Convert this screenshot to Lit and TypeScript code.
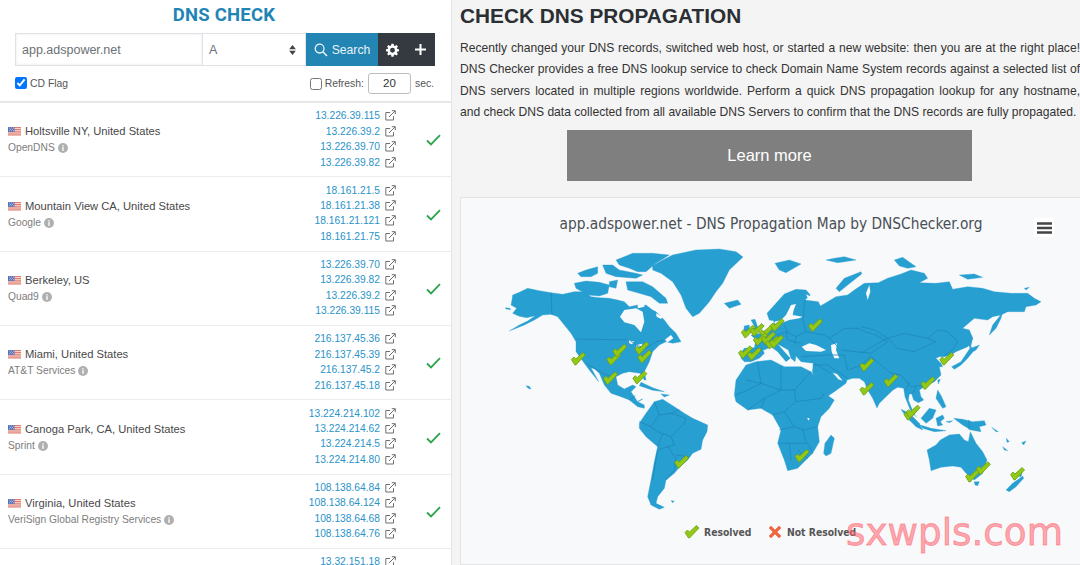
import { LitElement, html, css, svg } from "lit";
import { customElement } from "lit/decorators.js";

const poly = (pts: string) => "M" + pts.trim().replace(/\)\s*\(/g, " L").replace(/[()]/g, "") + " Z";
const line = (pts: string) => "M" + pts.trim().replace(/\)\s*\(/g, " L").replace(/[()]/g, "");

interface Group { tx: number; ty: number; land: string[]; holes: string[]; borders: string[]; }

const GROUPS: Group[] = [
  {
    tx: 495, ty: 245,
    land: [
      "(40,258)(70,240)(95,228)(118,212)(92,218)(70,214)(50,205)(62,190)(45,180)(48,165)(50,150)(70,142)(95,130)(130,137)(165,143)(200,148)(235,140)(265,140)(285,155)(310,158)(340,160)(365,165)(385,170)(400,185)(425,180)(450,180)(470,195)(480,200)(505,225)(520,245)(540,265)(555,290)(530,295)(510,290)(490,300)(470,320)(460,350)(445,380)(450,405)(445,405)(432,385)(400,380)(380,385)(360,395)(365,420)(385,432)(410,420)(420,425)(405,440)(425,470)(445,480)(445,490)(425,485)(400,465)(375,455)(345,445)(325,420)(310,385)(296,372)(285,368)(308,410)(280,375)(265,355)(240,320)(240,290)(225,265)(205,240)(185,215)(165,208)(140,210)(115,225)(85,240)",
      "(28,188)(42,190)(44,194)(30,192)",
      "(235,115)(270,108)(310,112)(340,120)(335,145)(310,153)(275,150)(240,130)",
      "(245,85)(270,75)(305,65)(305,85)(285,95)(255,95)",
      "(320,60)(350,60)(370,75)(420,85)(440,90)(420,100)(360,95)(330,85)",
      "(360,45)(410,25)(470,25)(520,30)(480,55)(450,80)(425,80)(400,70)(370,60)",
      "(390,110)(440,110)(470,125)(510,160)(515,175)(490,175)(465,155)(430,145)(395,135)",
      "(340,110)(365,105)(360,130)(340,125)",
      "(470,62)(500,45)(530,30)(600,15)(670,12)(720,20)(741,36)(700,75)(680,115)(660,140)(640,170)(610,205)(590,215)(570,190)(555,150)(530,110)(495,85)(470,75)",
      "(685,175)(725,165)(735,178)(700,190)",
      "(435,412)(470,428)(505,440)(470,436)(430,422)",
      "(495,447)(520,450)(505,456)",
      "(90,422)(100,424)(105,432)(96,430)",
    ],
    holes: [
      "(372,215)(385,195)(420,190)(440,200)(445,230)(435,262)(415,240)(385,232)",
      "(425,150)(450,155)(445,185)(425,190)",
      "(480,205)(500,215)(495,222)(482,215)",
      "(505,285)(525,270)(532,280)(515,292)",
      "(398,285)(415,290)(408,298)(400,295)",
      "(420,300)(440,296)(435,305)(422,306)",
    ],
    borders: [
      "(165,143)(168,210)", "(242,282)(400,285)(420,300)(450,310)(480,290)(510,285)",
      "(270,355)(320,385)(345,395)(360,395)", "(400,465)(418,452)", "(425,470)(440,462)",
    ],
  },
  {
    tx: 620, ty: 390,
    land: [
      "(55,100)(75,70)(100,35)(125,28)(160,50)(190,70)(215,85)(260,105)(258,125)(245,150)(240,178)(215,190)(200,210)(175,232)(160,250)(135,270)(130,295)(110,320)(105,340)(130,352)(115,358)(90,345)(80,320)(90,270)(100,215)(110,170)(75,140)(55,115)",
      "(150,332)(160,333)(155,338)",
      "(340,15)(345,-30)(375,-75)(405,-85)(450,-90)(490,-70)(540,-70)(570,-55)(590,-30)(610,10)(640,30)(625,55)(600,80)(590,110)(595,155)(575,190)(560,205)(530,235)(500,242)(490,210)(470,160)(480,120)(455,75)(420,55)(380,60)(345,35)",
      "(608,190)(612,160)(630,135)(640,145)(630,190)(615,198)",
    ],
    holes: ["(558,85)(566,84)(563,92)"],
    borders: [
      "(100,35)(115,75)(90,110)(110,125)(150,140)(160,165)(140,170)(110,180)",
      "(115,75)(150,70)(175,60)", "(150,70)(195,85)(190,100)(150,140)", "(140,170)(165,205)(160,240)(135,270)",
      "(90,110)(55,95)", "(125,130)(110,170)", "(110,180)(95,270)", "(165,195)(205,200)",
      "(410,-85)(420,-20)(380,0)(345,15)", "(480,-70)(480,0)(430,25)(380,60)", "(570,-55)(520,0)(480,0)",
      "(520,0)(525,35)(490,65)(455,75)", "(525,35)(600,25)(610,10)", "(490,65)(520,110)(475,120)",
      "(520,110)(550,120)(590,110)", "(475,160)(560,160)(575,190)", "(505,160)(510,210)", "(545,120)(555,155)",
      "(560,205)(530,180)", "(420,55)(430,25)", "(420,-20)(480,0)", "(375,-30)(420,-20)",
    ],
  },
  {
    tx: 730, ty: 250,
    land: [
      "(30,310)(40,295)(70,293)(75,270)(60,255)(90,250)(105,240)(130,235)(128,212)(115,210)(108,190)(135,160)(160,132)(195,118)(225,120)(238,135)(222,150)(262,155)(268,168)(285,158)(315,140)(350,135)(370,120)(400,100)(442,98)(470,85)(510,72)(540,60)(580,70)(590,85)(565,98)(615,100)(655,95)(665,118)(710,110)(755,115)(790,125)(840,130)(890,130)(910,145)(930,155)(915,165)(885,170)(880,185)(830,185)(810,195)(785,200)(770,210)(730,205)(695,235)(715,240)(725,265)(710,290)(675,305)(660,315)(640,320)(625,320)(615,325)(630,340)(635,350)(625,350)(630,375)(610,395)(580,410)(565,420)(570,440)(578,450)(562,458)(548,450)(542,432)(535,432)(532,450)(548,490)(555,500)(538,480)(522,440)(518,415)(500,412)(486,420)(465,440)(445,460)(438,474)(425,445)(410,420)(400,395)(385,385)(365,385)(348,390)(345,400)(310,425)(281,445)(260,410)(244,365)(247,340)(210,335)(195,318)(192,335)(180,325)(172,300)(140,282)(160,305)(178,325)(165,335)(140,305)(120,290)(100,300)(95,297)(100,310)(85,325)(60,335)(40,335)(30,325)",
      "(60,210)(72,208)(85,245)(65,250)(72,232)",
      "(40,228)(55,225)(55,245)(38,245)",
      "(315,115)(340,85)(390,65)(392,72)(350,105)(325,125)",
      "(132,40)(175,30)(210,42)(165,68)(145,60)",
      "(285,30)(310,25)(340,20)(375,30)(320,38)",
      "(490,30)(515,22)(555,50)(530,55)(505,48)",
      "(685,75)(730,72)(755,82)(710,88)",
      "(880,115)(895,112)(885,120)",
      "(662,350)(690,335)(710,305)(720,290)(730,300)(710,325)(690,345)(670,358)",
      "(720,295)(745,285)(735,300)(725,305)",
      "(712,240)(725,265)(718,295)(708,280)",
      "(775,255)(785,225)(805,200)(815,185)(810,205)(795,235)",
      "(620,390)(628,388)(622,402)",
    ],
    holes: [
      "(130,215)(150,210)(165,195)(180,165)(195,162)(188,180)(185,195)(215,200)(205,205)(175,210)(150,220)(132,222)",
      "(212,290)(235,280)(255,285)(285,300)(270,305)(225,303)",
      "(300,285)(318,280)(315,300)(325,325)(310,325)(302,305)",
      "(305,368)(318,372)(335,392)(322,388)",
      "(405,130)(415,105)(418,125)(410,150)",
      "(225,133)(240,140)(232,148)",
    ],
    borders: [
      "(222,150)(215,210)(225,245)(280,255)(295,265)(320,290)",
      "(295,265)(340,235)(380,235)(400,245)(435,255)(470,275)(450,290)(420,310)",
      "(390,230)(430,240)(470,265)(520,250)(590,265)(620,240)(650,245)(680,275)(665,300)(640,315)",
      "(470,265)(500,295)(550,305)(615,275)(590,265)",
      "(390,310)(440,280)(470,265)", "(420,320)(480,370)(510,375)", "(510,375)(540,410)(580,405)",
      "(105,240)(140,255)(165,245)(195,260)(225,245)", "(165,245)(170,270)(210,280)", "(120,250)(130,280)",
      "(140,255)(145,280)", "(75,295)(95,297)", "(210,320)(290,315)(340,315)", "(340,315)(350,360)(380,350)(395,340)",
      "(250,340)(300,370)", "(330,300)(420,310)", "(395,340)(420,320)", "(245,345)(290,345)", "(290,345)(350,385)",
      "(525,420)(535,395)", "(545,430)(555,410)", "(195,260)(190,285)", "(160,225)(170,245)",
    ],
  },
  {
    tx: 880, ty: 380,
    land: [
      "(60,88)(85,100)(115,130)(125,150)(105,140)(75,110)",
      "(118,135)(150,145)(195,152)(160,155)(125,145)",
      "(120,115)(145,85)(165,90)(155,115)(135,130)",
      "(165,115)(185,105)(190,115)(178,125)(185,135)(170,138)",
      "(170,30)(182,50)(195,80)(185,85)(165,55)",
      "(218,115)(245,118)(275,125)(310,122)(315,135)(295,140)(300,155)(270,150)(245,135)",
      "(195,125)(215,122)(205,128)",
      "(138,210)(165,195)(178,180)(205,165)(235,162)(250,180)(262,185)(268,155)(285,190)(305,215)(318,240)(305,280)(280,300)(255,280)(240,262)(215,258)(180,262)(150,272)(145,240)",
      "(280,305)(295,305)(290,317)(282,315)",
      "(375,330)(395,310)(425,288)(428,295)(405,320)(385,335)",
      "(395,285)(425,270)(420,290)",
      "(332,142)(352,155)(345,155)",
      "(376,175)(385,185)(378,187)",
      "(365,200)(380,212)(370,210)",
      "(422,188)(435,183)(428,195)",
    ],
    holes: [],
    borders: ["(263,120)(265,150)"],
  },
];

const MARKS: [number, number][] = [
  [317,507],[405,507],[420,482],[475,475],[482,500],[397,565],[470,563],[740,425],[762,420],[785,425],[812,405],
  [770,448],[790,445],[800,458],[810,455],[733,487],[755,492],[907,406],[1035,525],[1035,597],[1095,572],[1187,580],
  [1234,507],[1145,672],[1150,665],[874,798],[574,816],[1298,858],[1325,835],[1410,852],
];

const SX = 630 / 1568;
const px = (x: number) => 450 + x * SX;
const py = (y: number) => 190 + y / 3;

interface Row { place: string; isp: string; ips: string[]; }
const ROWS: Row[] = [
  { place: "Holtsville NY, United States", isp: "OpenDNS", ips: ["13.226.39.115","13.226.39.2","13.226.39.70","13.226.39.82"] },
  { place: "Mountain View CA, United States", isp: "Google", ips: ["18.161.21.5","18.161.21.38","18.161.21.121","18.161.21.75"] },
  { place: "Berkeley, US", isp: "Quad9", ips: ["13.226.39.70","13.226.39.82","13.226.39.2","13.226.39.115"] },
  { place: "Miami, United States", isp: "AT&T Services", ips: ["216.137.45.36","216.137.45.39","216.137.45.2","216.137.45.18"] },
  { place: "Canoga Park, CA, United States", isp: "Sprint", ips: ["13.224.214.102","13.224.214.62","13.224.214.5","13.224.214.80"] },
  { place: "Virginia, United States", isp: "VeriSign Global Registry Services", ips: ["108.138.64.84","108.138.64.124","108.138.64.68","108.138.64.76"] },
];

const extIcon = html`<svg class="ext" viewBox="0 0 11 11" width="11" height="11"><path d="M8.500 6.200V10H.8V2.500H5" fill="none" stroke="#6f6f6f" stroke-width="1"/><path d="M4 7 10 1M6.800 .7H10.300V4.200" fill="none" stroke="#6f6f6f" stroke-width="1"/></svg>`;
const flagIcon = html`<svg class="flag" viewBox="0 0 13 9" width="13" height="9"><rect width="13" height="9" fill="#f3e9e6"/><path d="M0 .6H13M0 2.400H13M0 4.200H13M0 6H13M0 7.900H13" stroke="#e2705f" stroke-width="1"/><rect width="6.500" height="5" fill="#5a70b8"/><path d="M1 1h.8M3 1h.8M5 1h.8M2 2.400h.8M4 2.400h.8M1 3.800h.8M3 3.800h.8M5 3.800h.8" stroke="#e6e9f5" stroke-width=".8"/></svg>`;
const infoIcon = html`<svg class="info" viewBox="0 0 10 10" width="10" height="10"><circle cx="5" cy="5" r="5" fill="#b0b0b0"/><rect x="4.300" y="4.200" width="1.400" height="3.600" fill="#fff"/><rect x="4.300" y="2.200" width="1.400" height="1.300" fill="#fff"/></svg>`;
const tickIcon = html`<svg class="tick" viewBox="0 0 15 12" width="15" height="12"><path d="M1 6.500 5 10.500 14 1.200" fill="none" stroke="#2ea44f" stroke-width="1.800"/></svg>`;

const markPath = "M-7 .5 -4.500 -2 -2.500 0 4.500 -6.500 7 -4 -2.500 6 -3.500 6Z";

@customElement("app-root")
export class AppRoot extends LitElement {
  static styles = css`
    :host { display: block; width: 1080px; height: 565px; overflow: hidden; font-family: "Liberation Sans", Arial, sans-serif; background: #f4f4f4; position: relative; }
    .page { display: flex; height: 565px; overflow: hidden; }
    .left { width: 452px; box-sizing: border-box; flex: none; background: #fff; border-right: 1px solid #e6e6e6; overflow: hidden; height: 565px; }
    .title { margin: 0; height: 33px; line-height: 31px; text-align: center; font-family: Roboto, sans-serif; font-size: 18.500px; font-weight: 700; color: #1f85b5; padding-right: 3px; letter-spacing: .2px; }
    .form { display: flex; height: 33px; margin: 0 16px 0 15px; }
    .field { box-sizing: border-box; height: 33px; border: 1px solid #dfe3e8; background: #fff; font-size: 12.500px; color: #6b7177; display: flex; align-items: center; padding-left: 6px; }
    .host { width: 188px; box-shadow: inset 0 0 3px #e9e9e9; font-family: inherit; outline: none; }
    .type { width: 103px; border-left: 0; justify-content: space-between; padding-right: 9px; }
    .search { width: 72px; background: #2385b3; color: #e8f3f8; font-size: 12.200px; display: flex; align-items: center; justify-content: center; gap: 4px; }
    .tools { width: 57px; background: #343a40; display: flex; align-items: center; justify-content: space-between; padding: 0 9px 0 8px; box-sizing: border-box; }
    .opts { display: flex; align-items: center; height: 35px; margin: 0 17px 0 15px; font-size: 10.400px; color: #555; }
    .opts input[type=checkbox] { margin: 0 3px 0 0; width: 12px; height: 12px; }
    .cd { display: flex; align-items: center; flex: 1; margin-top: -1px; }
    .refresh { display: flex; align-items: center; }
    .sec { box-sizing: border-box; width: 43px; height: 21px; border: 1px solid #bdbdbd; border-radius: 3px; margin: 0 4px; text-align: center; line-height: 19px; font-size: 11.500px; color: #333; background: #fff; }
    .rows { border-top: 2px solid #e6e6e6; box-shadow: 0 1px 2px #f0f0f0; }
    .row { box-sizing: border-box; height: 74.350px; border-bottom: 1px solid #ececec; padding: 5px 10px 0 8px; display: flex; align-items: flex-start; }
    .where { flex: 1; align-self: center; margin-top: -5px; }
    .place { display: flex; align-items: center; gap: 4px; font-size: 11.200px; line-height: 17px; color: #484848; white-space: nowrap; }
    .isp { display: flex; align-items: center; gap: 3px; font-size: 10.250px; line-height: 16px; color: #7d7d7d; white-space: nowrap; }
    .ips { display: flex; flex-direction: column; align-items: flex-end; }
    .ip { display: flex; align-items: center; gap: 5px; height: 15.450px; font-size: 10.250px; color: #2a93c9; }
    .ok { width: 45px; flex: none; align-self: center; display: flex; justify-content: flex-end; margin-top: -4px; }
    .right { flex: 1; min-width: 0; padding-left: 8px; overflow: hidden; }
    h1 { margin: 0; height: 33px; line-height: 32px; font-size: 20.800px; font-weight: 700; color: #2b2f33; white-space: nowrap; }
    .para { width: 620px; margin: 5px 0 0; font-size: 12.100px; line-height: 21.400px; color: #333; }
    .para span { display: block; white-space: nowrap; text-align: justify; text-align-last: justify; }
    .para span.end { text-align-last: left; }
    .more { width: 405px; height: 51px; margin: 6px 0 16px 107px; background: #7f7f7f; color: #fff; font-size: 16.500px; display: flex; align-items: center; justify-content: center; }
    .card { box-sizing: border-box; width: 622px; height: 368px; background: #f8f9fb; border: 1px solid #e3e4e6; position: relative; }
    .map { display: block; position: absolute; left: -1px; top: -1px; }
    .mtitle { font-family: "DejaVu Sans", sans-serif; font-stretch: condensed; font-size: 15.300px; fill: #4a4f55; }
    .ltext { font-family: "DejaVu Sans", sans-serif; font-stretch: condensed; font-size: 10.300px; font-weight: 700; fill: #555; }
    .wm { position: absolute; left: 846px; top: 507px; font-family: "DejaVu Sans", sans-serif; font-size: 37.300px; line-height: 50px; color: rgba(255, 96, 108, .55); -webkit-text-stroke: .9px rgba(255, 96, 108, .55); white-space: nowrap; }
  `;

  render() {
    return html`
      <div class="page">
        <section class="left">
          <h2 class="title">DNS CHECK</h2>
          <div class="form">
            <input class="field host" value="app.adspower.net" />
            <div class="field type">A
              <svg viewBox="0 0 8 12" width="7" height="10"><path d="M4 0 8 5H0ZM4 12 0 7H8Z" fill="#444"/></svg>
            </div>
            <div class="search">
              <svg viewBox="0 0 14 14" width="14" height="14"><circle cx="5.600" cy="5.600" r="4.400" fill="none" stroke="#e8f3f8" stroke-width="1.300"/><path d="M8.800 8.800 13 13" stroke="#e8f3f8" stroke-width="1.600"/></svg>
              Search
            </div>
            <div class="tools">
              <svg viewBox="0 0 24 25" width="13" height="14"><path fill="#fff" d="M10 1h4l.6 3.100 2 .9L19.300 3.200 22 6l-1.900 2.600.8 2L24 11.200v3.600l-3.100.6-.8 2L22 20l-2.700 2.800-2.700-1.800-2 .8L14 25h-4l-.6-3.200-2-.8L4.700 22.800 2 20l1.900-2.600-.8-2L0 14.800v-3.600l3.100-.6.8-2L2 6l2.700-2.800L7.400 5l2-.9ZM12 8.500a4.500 4.500 0 1 0 0 9 4.500 4.500 0 0 0 0-9Z" fill-rule="evenodd"/></svg>
              <svg viewBox="0 0 12 12" width="11" height="11"><path d="M6 0V12M0 6H12" stroke="#fff" stroke-width="2.200"/></svg>
            </div>
          </div>
          <div class="opts">
            <label class="cd"><input type="checkbox" checked />CD Flag</label>
            <label class="refresh"><input type="checkbox" />Refresh:<span class="sec">20</span>sec.</label>
          </div>
          <div class="rows">
            ${ROWS.map((r) => html`
              <div class="row">
                <div class="where">
                  <div class="place">${flagIcon}${r.place}</div>
                  <div class="isp">${r.isp} ${infoIcon}</div>
                </div>
                <div class="ips">${r.ips.map((ip) => html`<div class="ip">${ip}${extIcon}</div>`)}</div>
                <div class="ok">${tickIcon}</div>
              </div>`)}
            <div class="row">
              <div class="where"></div>
              <div class="ips"><div class="ip">13.32.151.18${extIcon}</div></div>
              <div class="ok"></div>
            </div>
          </div>
        </section>
        <main class="right">
          <h1>CHECK DNS PROPAGATION</h1>
          <p class="para">
            <span>Recently changed your DNS records, switched web host, or started a new website: then you are at the right place!</span>
            <span>DNS Checker provides a free DNS lookup service to check Domain Name System records against a selected list of</span>
            <span>DNS servers located in multiple regions worldwide. Perform a quick DNS propagation lookup for any hostname,</span>
            <span class="end">and check DNS data collected from all available DNS Servers to confirm that the DNS records are fully propagated.</span>
          </p>
          <div class="more">Learn more</div>
          <div class="card">
            <svg class="map" width="622" height="368" viewBox="459 197 622 368">
              <text class="mtitle" x="770" y="229" text-anchor="middle">app.adspower.net - DNS Propagation Map by DNSChecker.org</text>
              <rect x="1033" y="218" width="20" height="19" fill="#fff"/>
              <path d="M1036 223.500H1051M1036 228H1051M1036 232.500H1051" stroke="#444" stroke-width="2.500"/>
              ${GROUPS.map((g) => svg`
                <g transform="translate(${g.tx} ${g.ty}) scale(${1 / 3})">
                  ${g.land.map((d) => svg`<path d=${poly(d)} fill="#279fd1" stroke="#279fd1" stroke-width="1" stroke-linejoin="round"/>`)}
                </g>`)}
              ${GROUPS.map((g) => svg`
                <g transform="translate(${g.tx} ${g.ty}) scale(${1 / 3})">
                  ${g.holes.map((d) => svg`<path d=${poly(d)} fill="#f8f9fb"/>`)}
                  ${g.borders.map((d) => svg`<path d=${line(d)} fill="none" stroke="#1f87b9" stroke-width="2.400"/>`)}
                </g>`)}
              ${MARKS.map(([x, y]) => svg`<path transform="translate(${px(x)} ${py(y)})" d=${markPath} fill="#92c915" stroke="#6f9a18" stroke-width=".8"/>`)}
              <path transform="translate(691 532)" d=${markPath} fill="#92c915" stroke="#6f9a18" stroke-width=".8"/>
              <text class="ltext" x="703" y="535.500">Resolved</text>
              <path transform="translate(774 532)" d="M-6 -4 -4 -6 0 -2 4 -6 6 -4 2 0 6 4 4 6 0 2 -4 6 -6 4 -2 0Z" fill="#f2663f" stroke="#e05a3a" stroke-width=".5"/>
              <text class="ltext" x="786" y="535.500">Not Resolved</text>
            </svg>
          </div>
        </main>
      </div>
      <div class="wm">sxwpls.com</div>
    `;
  }
}
